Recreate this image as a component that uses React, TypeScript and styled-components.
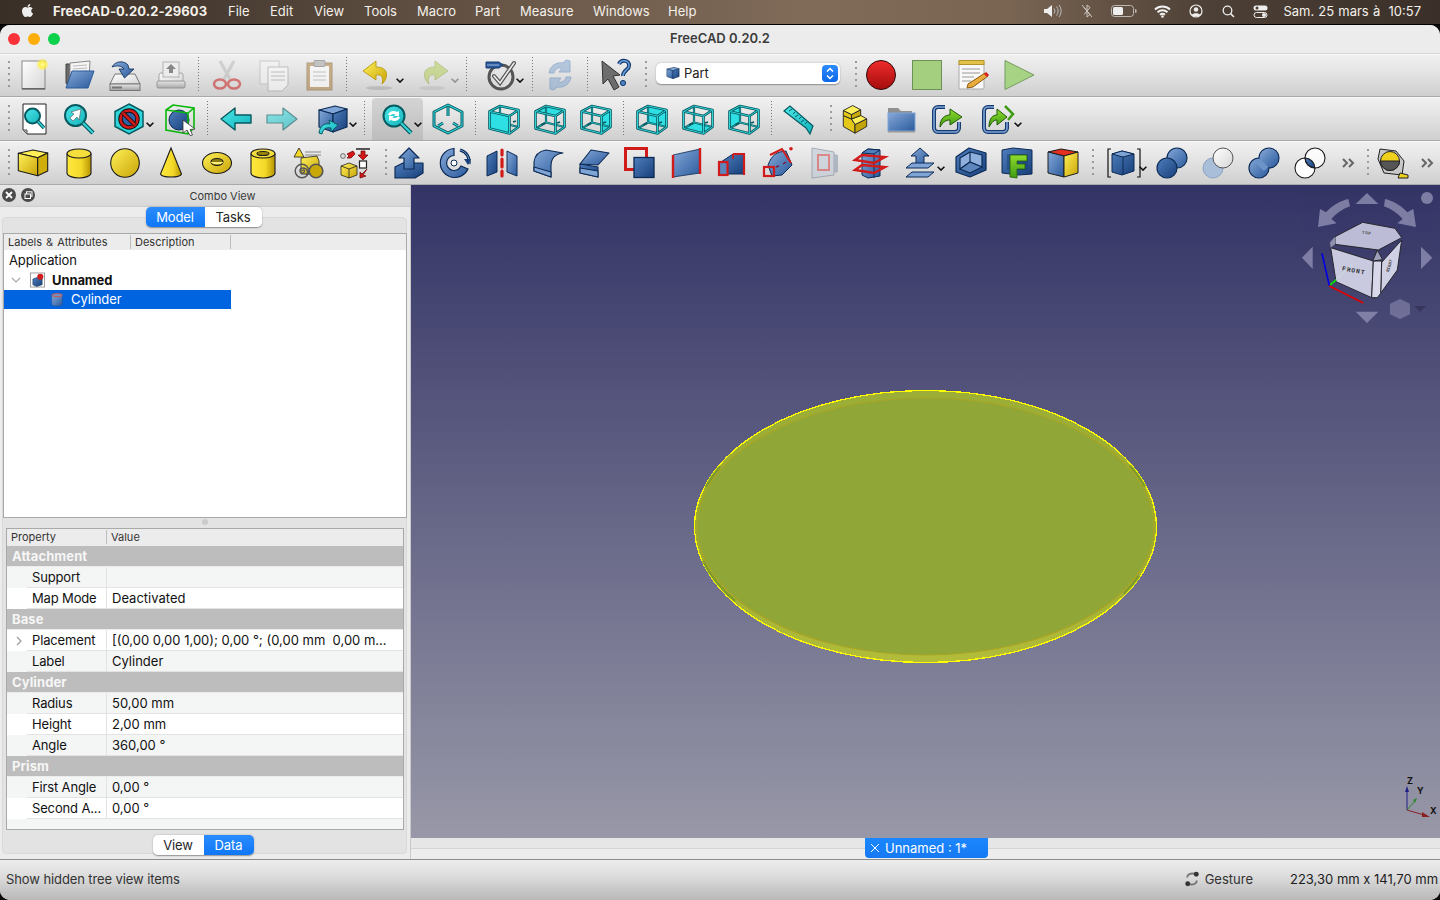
import React from 'react';
import styled, { createGlobalStyle, css } from 'styled-components';
import { FaApple } from 'react-icons/fa';

const GlobalStyle = createGlobalStyle`
  html, body { margin: 0; padding: 0; background: #111; }
  * { box-sizing: border-box; }
  body { font-family: Inter, "Liberation Sans", sans-serif; }
`;

const Root = styled.div`
  width: 1440px; height: 900px; overflow: hidden; display: flex; flex-direction: column; background: #0d0b0a;
`;
const MenuBar = styled.div`
  height: 25px; flex: none; display: flex; align-items: center; color: #f4f0ea; font-size: 13px;
  background: linear-gradient(90deg, #3a2f27 0%, #4a3d33 16%, #6f5c4c 40%, #806b59 56%, #7a6553 70%, #4d4036 84%, #3a3029 100%);
  border-bottom: 1px solid #000;
  padding: 0 19px 2px 20px;
`;
const MenuApple = styled.span`
  display: flex; font-size: 15px; width: 33px; color: #eee; margin-bottom: 1px;
`;
const MenuTitle = styled.span`
  font-weight: 700; width: 175px; letter-spacing: 0.1px;
`;
const MenuItem = styled.span<{ $w: number }>`
  width: ${p => p.$w}px;
`;
const Tray = styled.div`
  margin-left: auto; display: flex; align-items: center;
`;
const TrayIcon = styled.span<{ $ml: number }>`
  display: flex; margin-left: ${p => p.$ml}px;
`;
const Clock = styled.span`
  margin-left: 15px; word-spacing: 0.5px; white-space: pre;
`;

const Window = styled.div`
  flex: 1; display: flex; flex-direction: column; min-height: 0; overflow: hidden;
  border-radius: 10px; background: #ececec; letter-spacing: -0.1px;
`;
const TitleBar = styled.div`
  height: 29px; flex: none; position: relative; display: flex; align-items: center; justify-content: center;
  background: #ececec; border-bottom: 1px solid #d6d6d6; padding-bottom: 2px;
  font-size: 13px; font-weight: 600; color: #3c3c3c; letter-spacing: 0;
`;
const Lights = styled.div`
  position: absolute; left: 8px; top: 8px; display: flex; gap: 8px;
`;
const Light = styled.span<{ $c: string }>`
  width: 12px; height: 12px; border-radius: 50%; background: ${p => p.$c};
`;
const ToolRow = styled.div<{ $h: number; $pb?: number }>`
  height: ${p => p.$h}px; flex: none; display: flex; align-items: center; position: relative;
  padding-bottom: ${p => p.$pb ?? 0}px;
  background: linear-gradient(180deg, #f0f0f0 0%, #e6e6e6 35%, #cfcfcf 100%);
  border-bottom: 1px solid #a9a9a9;
  border-top: 1px solid #f8f8f8;
`;
const Slot = styled.span<{ $ml: number; $pressed?: boolean }>`
  width: 32px; height: 32px; flex: none; display: block; position: relative; margin-left: ${p => p.$ml}px;
  svg { position: relative; z-index: 1; display: block; }
  ${p => p.$pressed && css`
    &::before {
      content: ''; position: absolute; left: -9px; width: 51px; top: -5px; height: 42px;
      border-radius: 4px 4px 0 0; background: linear-gradient(180deg, #d4d4d4, #bdbdbd);
    }
  `}
`;
const CaretBox = styled.span<{ $ml: number; $faded?: boolean }>`
  width: 8px; height: 5px; flex: none; position: relative; z-index: 2; margin-left: ${p => p.$ml}px; margin-top: 10px;
  display: block; opacity: ${p => (p.$faded ? 0.35 : 1)};
  svg { display: block; }
`;
const Sep = styled.span<{ $ml: number }>`
  width: 1px; height: 36px; flex: none; margin-left: ${p => p.$ml}px;
  background: repeating-linear-gradient(180deg, #777 0 1px, transparent 1px 3px);
`;
const Grip = styled.span<{ $ml: number }>`
  width: 2px; height: 28px; flex: none; margin-left: ${p => p.$ml}px;
  background: repeating-linear-gradient(180deg, #9a9a9a 0 2px, transparent 2px 6px);
`;
const More = styled.span<{ $ml: number }>`
  width: 14px; flex: none; margin-left: ${p => p.$ml}px; display: block;
  svg { display: block; }
`;
const Combo = styled.div<{ $ml: number }>`
  width: 184px; height: 21px; flex: none; margin-left: ${p => p.$ml}px; margin-bottom: 3px; border-radius: 5px; background: #fff;
  box-shadow: 0 0.5px 1.5px rgba(0,0,0,.35); display: flex; align-items: center; padding: 0 0 1px 9px;
  font-size: 13px; color: #222; gap: 3px; position: relative;
`;
const ComboStep = styled.span`
  position: absolute; right: 2px; top: 2px; width: 16px; height: 17px; border-radius: 4px;
  background: linear-gradient(180deg, #2f8bff, #0a68e8); display: flex; align-items: center; justify-content: center;
`;

const Main = styled.div`
  flex: 1; display: flex; min-height: 0;
`;
const Panel = styled.aside`
  width: 411px; flex: none; display: flex; flex-direction: column; background: #ececec; border-right: 1px solid #c9c9c9;
  position: relative;
`;
const DockHead = styled.div`
  height: 22px; flex: none; position: relative; display: flex; align-items: center; justify-content: center;
  font-size: 11px; color: #3a3a3a; background: linear-gradient(180deg, #e6e6e6, #d8d8d8); padding-left: 35px;
  border-bottom: 1px solid #cdcdcd; letter-spacing: 0;
`;
const DockBtns = styled.div`
  position: absolute; left: 2px; top: 3px; display: flex; gap: 5px;
`;
const DockBtn = styled.span`
  width: 14px; height: 14px; border-radius: 50%; background: #4a4a4a; display: flex; align-items: center; justify-content: center;
`;
const Body = styled.div`
  flex: 1; display: flex; flex-direction: column; padding: 0 3px 0 3px; min-height: 0; position: relative;
`;
const Seg = styled.div`
  display: flex; height: 20px; border-radius: 5px; align-self: center; position: relative; z-index: 2;
  box-shadow: 0 0.5px 1.5px rgba(0,0,0,.4); overflow: hidden; font-size: 13px;
`;
const SegItem = styled.span<{ $on?: boolean; $w: number }>`
  width: ${p => p.$w}px; display: flex; align-items: center; justify-content: center;
  background: ${p => (p.$on ? 'linear-gradient(180deg,#2a8cff,#0f77f5)' : '#fff')};
  color: ${p => (p.$on ? '#fff' : '#262626')};
`;
const TopSeg = styled(Seg)`
  margin-left: -3px;
  margin-bottom: 6px;
`;
const Tree = styled.div`
  height: 285px; flex: none; background: #fff; border: 1px solid #a9a9a9;
  display: flex; flex-direction: column;
`;
const TreeHead = styled.div`
  height: 16px; flex: none; display: flex; background: #ececec; font-size: 11px; color: #333; align-items: center;
  padding-bottom: 1px; letter-spacing: 0;
`;
const TreeCol = styled.span<{ $w: number; $ws?: number }>`
  width: ${p => p.$w}px; padding-left: 4px; border-right: 1px solid #bdbdbd; line-height: 14px; white-space: nowrap;
  word-spacing: ${p => p.$ws ?? 0}px;
`;
const TreeRow = styled.div<{ $sel?: boolean; $bold?: boolean; $pad: number }>`
  height: ${p => (p.$sel ? 19 : 20)}px; width: 227px; display: flex; align-items: center; padding-left: ${p => p.$pad}px; font-size: 13px;
  padding-bottom: ${p => (p.$sel || p.$bold ? 1 : 0)}px;
  background: ${p => (p.$sel ? '#0064e1' : 'transparent')}; color: ${p => (p.$sel ? '#fff' : '#111')};
  font-weight: ${p => (p.$bold ? 700 : 400)};
  white-space: nowrap;
`;
const Grab = styled.div`
  height: 10px; flex: none; display: flex; align-items: center; justify-content: center; padding-bottom: 3px;
  &::after { content: ''; width: 6px; height: 6px; border-radius: 50%; background: #cbcbcb; }
`;
const PropBox = styled.div`
  margin-left: 3px; width: 398px; height: 302px; flex: none; background: #f4f5f5; border: 1px solid #a9a9a9;
  display: flex; flex-direction: column; position: relative; z-index: 1;
`;
const PropHead = styled.div`
  height: 17px; flex: none; display: flex; align-items: center; background: #ececec; font-size: 11px; color: #333;
  padding-bottom: 2px; letter-spacing: 0;
`;
const PropHeadCell = styled.span<{ $w?: number }>`
  width: ${p => (p.$w ? `${p.$w}px` : 'auto')}; padding-left: 4px; line-height: 14px;
  border-right: ${p => (p.$w ? '1px solid #bdbdbd' : 'none')};
`;
const GroupRow = styled.div`
  height: 21px; flex: none; background: #bdbdbd; color: #f6f6f6; font-size: 13px; font-weight: 700; padding-left: 5px;
  display: flex; align-items: center; border-bottom: 1px solid #ececec; letter-spacing: 0.1px;
`;
const PropRow = styled.div<{ $alt?: boolean }>`
  height: 21px; flex: none; display: flex; font-size: 13px; color: #111;
  background: ${p => (p.$alt ? '#f4f5f5' : '#fff')};
`;
const Gutter = styled.span`
  width: 20px; flex: none; display: flex; align-items: center; justify-content: center; padding-left: 4px;
`;
const NameCell = styled.span`
  width: 80px; flex: none; padding-left: 5px; border-right: 1px solid #e3e3e3; border-bottom: 1px solid #e3e3e3;
  display: flex; align-items: center; white-space: nowrap; letter-spacing: -0.15px;
`;
const ValueCell = styled.span`
  flex: 1; padding-left: 5px; border-bottom: 1px solid #e3e3e3; display: flex; align-items: center; white-space: pre; letter-spacing: 0;
`;
const BottomSeg = styled(Seg)`
  margin: 5px 0 0 -4px; z-index: 2;
`;
const GroupFrame = styled.div<{ $top: number; $h: number }>`
  position: absolute; left: 2px; right: 3px; top: ${p => p.$top}px; height: ${p => p.$h}px;
  background: #e3e3e3; border: 1px solid #d9d9d9; border-radius: 4px; z-index: 0;
`;
const Zed = styled.div`
  position: relative; z-index: 1; display: flex; flex-direction: column; flex: 1; min-height: 0;
`;

const ViewCol = styled.div`
  flex: 1; display: flex; flex-direction: column; min-width: 0;
`;
const Canvas = styled.div`
  height: 653px; flex: none; position: relative; overflow: hidden;
  background: linear-gradient(180deg, #333366 0%, #9898a8 100%);
`;
const Solid = styled.svg`
  position: absolute; left: 283px; top: 205px;
`;
const Cube = styled.svg`
  position: absolute; right: 0; top: 0;
`;
const Axis = styled.svg`
  position: absolute; right: 0; bottom: 18px;
`;
const TabStrip = styled.div`
  flex: 1; position: relative; background: #e6e6e6; display: flex; flex-direction: column;
  &::before { content: ''; height: 10px; border-bottom: 1px solid #d4d4d4; flex: none; }
  &::after { content: ''; flex: 1; background: #ededed; }
`;
const DocTab = styled.div`
  position: absolute; left: 454px; top: 0; width: 123px; height: 20px; border-radius: 0 0 4px 4px;
  background: linear-gradient(180deg, #1b87ff, #1579f2); color: #fff; font-size: 13px;
  display: flex; align-items: center; gap: 5px; padding-left: 5px; letter-spacing: 0;
`;
const StatusBar = styled.div`
  height: 41px; flex: none; display: flex; align-items: center; padding: 0 0 2px 6px; font-size: 13px; color: #333;
  background: linear-gradient(180deg, #ededed 0%, #dcdcdc 40%, #b9b9b9 100%); border-top: 1px solid #8c8c8c;
`;
const Gesture = styled.span`
  margin-left: auto; display: flex; align-items: center; gap: 5px; color: #333; letter-spacing: 0;
`;
const Dims = styled.span`
  margin-left: 37px; color: #1c1c1c; white-space: nowrap; width: 150px; letter-spacing: 0;
`;

/* ------- icons ------- */
const S = '#1c1c1c';
const Defs = () => (
  <svg width="0" height="0" style={{ position: 'absolute' }}>
    <defs>
      <linearGradient id="gY" x1="0" y1="0" x2="1" y2="1"><stop offset="0" stopColor="#fff15a" /><stop offset="1" stopColor="#c9a406" /></linearGradient>
      <linearGradient id="gYh" x1="0" y1="0" x2="1" y2="0"><stop offset="0" stopColor="#ffe93e" /><stop offset=".6" stopColor="#f3d828" /><stop offset="1" stopColor="#b89400" /></linearGradient>
      <linearGradient id="gB" x1="0" y1="0" x2="1" y2="1"><stop offset="0" stopColor="#86a9d8" /><stop offset="1" stopColor="#2a5a9c" /></linearGradient>
      <linearGradient id="gBd" x1="0" y1="0" x2="1" y2="1"><stop offset="0" stopColor="#4f7fbd" /><stop offset="1" stopColor="#173f7a" /></linearGradient>
      <linearGradient id="gW" x1="0" y1="0" x2="1" y2="1"><stop offset="0" stopColor="#fff" /><stop offset="1" stopColor="#d6d6d6" /></linearGradient>
      <linearGradient id="gG" x1="0" y1="0" x2="0" y2="1"><stop offset="0" stopColor="#e8e8e8" /><stop offset="1" stopColor="#a2a2a2" /></linearGradient>
      <linearGradient id="gC" x1="0" y1="0" x2="1" y2="1"><stop offset="0" stopColor="#4ce6e8" /><stop offset="1" stopColor="#12b4bc" /></linearGradient>
      <linearGradient id="gR" x1="0" y1="0" x2="0" y2="1"><stop offset="0" stopColor="#ef2b2b" /><stop offset="1" stopColor="#a50d0d" /></linearGradient>
      <linearGradient id="gGr" x1="0" y1="0" x2="0" y2="1"><stop offset="0" stopColor="#8fdc2e" /><stop offset="1" stopColor="#3f9a14" /></linearGradient>
      <linearGradient id="gRim" x1="0" y1="0" x2="0" y2="1"><stop offset="0" stopColor="#9cae35" /><stop offset=".6" stopColor="#9aad35" /><stop offset="1" stopColor="#b3bc3a" /></linearGradient>
      <radialGradient id="gGlow"><stop offset="0" stopColor="#fffbb0" /><stop offset=".45" stopColor="#fff04a" /><stop offset="1" stopColor="#fff04a" stopOpacity="0" /></radialGradient>
    </defs>
  </svg>
);

const C = { blue: '#0c2a55', cy: '#075a60', blueLine: '#173f7a' };

const wire = (fill: 'front' | 'top' | 'right' | 'back' | 'bottom' | 'left') => {
  const q: Record<string, string> = {
    front: '1.5,8.5 21.5,13 21.5,30.5 1.5,25.5',
    top: '1.5,8.5 12,3 30.5,7 21.5,13',
    right: '21.5,13 30.5,7 30.5,24 21.5,30.5',
    back: '12,3 30.5,7 30.5,24 12,19.5',
    bottom: '1.5,25.5 12,19.5 30.5,24 21.5,30.5',
    left: '1.5,8.5 12,3 12,19.5 1.5,25.5',
  };
  const outer = 'M1.5 8.5L12 3 30.5 7V24L21.5 30.5 1.5 25.5ZM1.5 8.5L21.5 13V30.5M21.5 13L30.5 7';
  const inner = 'M12 3V19.5M12 19.5L1.5 25.5M12 19.5L30.5 24';
  return (
    <g fill="none" strokeLinejoin="round">
      <polygon points={q[fill]} fill="#2ee0e4" />
      <path d={inner} stroke={C.cy} strokeWidth="2.2" />
      <path d={inner} stroke="#2fd4d8" strokeWidth=".7" />
      {fill === 'front' && <polygon points={q.front} fill="#2ee0e4" />}
      <path d={outer} stroke={C.cy} strokeWidth="2.6" />
      <path d={outer} stroke="#2fd4d8" strokeWidth="1" />
      <path d={fill === 'front' ? 'M25 19l3-1' : 'M7 22l4-2M26 19l-3 1'} stroke={C.cy} strokeWidth="1.8" />
    </g>
  );
};

const blueBox = (
  <g stroke={C.blue} strokeWidth="1.2" strokeLinejoin="round">
    <polygon points="2,7 18,3 30,6 16,11" fill="#7fa4d6" />
    <polygon points="2,7 16,11 16,29 2,24" fill="url(#gB)" />
    <polygon points="16,11 30,6 30,24 16,29" fill="url(#gBd)" />
  </g>
);

const isoLines = 'M16 2L30 9V23L16 30 2 23V9ZM16 4V13M6 23l5-3M26 23l-5-3';

const ICONS: Record<string, React.ReactNode> = {
  new: (<g><rect x="5" y="2" width="23" height="28" fill="url(#gW)" stroke="#888" strokeWidth="1" /><rect x="5" y="29" width="23" height="1.5" fill="#666" /><circle cx="25.5" cy="5.5" r="6.5" fill="url(#gGlow)" /></g>),
  open: (<g><polygon points="3,5 10,5 12,8 16,8 16,26 6,28 3,24" fill="#6a6a6a" stroke="#444" /><polygon points="7,4 27,2 26,20 7,22" fill="#f5f5f5" stroke="#888" /><path d="M10 7l14-1M10 10l14-1M10 13l14-1" stroke="#bbb" /><polygon points="9,12 31,12 25,29 3,29" fill="url(#gB)" stroke="#2a5a9c" /></g>),
  save: (<g><polygon points="6,15 26,15 31,25 1,25" fill="url(#gW)" stroke="#777" /><rect x="1" y="25" width="30" height="6.5" fill="url(#gG)" stroke="#777" /><rect x="3" y="27.5" width="10" height="2" fill="#777" /><path d="M3 8C6 2 15 1 19 6L20 10H25L15.5 19 10 10H15C13 7 8 6 3 8Z" fill="url(#gB)" stroke={C.blue} strokeWidth=".8" /></g>),
  saveAs: (<g opacity=".85"><rect x="4" y="14" width="24" height="11" rx="2" fill="url(#gW)" stroke="#999" /><rect x="8" y="3" width="16" height="15" fill="#eee" stroke="#aaa" /><polygon points="16,5 21,10 18,10 18,14 14,14 14,10 11,10" fill="#777" /><rect x="2" y="22" width="28" height="7" rx="1.5" fill="url(#gG)" stroke="#888" /></g>),
  cut: (<g opacity=".55" fill="none"><path d="M9 2L19 20M23 2L13 20" stroke="#b9b9b9" strokeWidth="3" /><ellipse cx="9" cy="25" rx="6" ry="4.5" stroke="#c81e1e" strokeWidth="2.5" /><ellipse cx="23" cy="25" rx="6" ry="4.5" stroke="#c81e1e" strokeWidth="2.5" /></g>),
  copy: (<g opacity=".5"><rect x="3" y="2" width="19" height="23" fill="#f8f8f8" stroke="#aaa" /><polygon points="11,8 31,8 31,26 25,32 11,32" fill="#fff" stroke="#999" /><path d="M14 13h14M14 17h14M14 21h14" stroke="#999" /></g>),
  paste: (<g opacity=".6"><rect x="4" y="4" width="25" height="27" fill="#b3894e" stroke="#8a6a3c" /><rect x="7" y="7" width="19" height="21" fill="#fff" /><rect x="11" y="1.5" width="11" height="6" rx="1" fill="#aaa" stroke="#777" /><path d="M10 13h13M10 17h13M10 21h13" stroke="#aaa" /></g>),
  undo: (<g><ellipse cx="17" cy="29" rx="13" ry="2" fill="#000" opacity=".12" /><path d="M14 2L1 12 14 21V16C19 15 22 18 20 25 26 20 28 8 14 8Z" fill="url(#gY)" stroke="#b59a10" strokeWidth=".9" strokeLinejoin="round" /></g>),
  redo: (<g opacity=".45"><ellipse cx="15" cy="29" rx="13" ry="2" fill="#000" opacity=".15" /><path d="M18 2L31 12 18 21V16C13 15 10 18 12 25 6 20 4 8 18 8Z" fill="#a8c838" stroke="#7f9a20" strokeWidth=".9" strokeLinejoin="round" /></g>),
  check: (<g fill="none"><circle cx="14" cy="18" r="12" stroke="#555" strokeWidth="3" /><circle cx="14" cy="18" r="9" stroke="#ddd" strokeWidth="1.5" /><path d="M7 17l6 7L27 4" stroke="#555" strokeWidth="4" strokeLinecap="round" /><path d="M7 17l6 7L27 4" stroke="#eee" strokeWidth="1.6" strokeLinecap="round" /><path d="M-1 3h13l4 3-4 3H-1Z" fill="#2a5a9c" stroke="#153a70" /><path d="M0 6h12" stroke="#9cbbe0" /></g>),
  refresh: (<g opacity=".5" fill="#7fa4d0" stroke="#4f7fbd" strokeWidth="1"><path d="M5 14C6 7 12 3 19 4L22 1 26 2V13L15 13 18 9C14 8 11 10 10 14Z" /><path d="M27 18C26 25 20 29 13 28L10 31 6 30V19L17 19 14 23C18 24 21 22 22 18Z" /></g>),
  whats: (<g><polygon points="2,2 20,16 13,17 19,28 14,31 8,20 3,25" fill="#6d6d6d" stroke="#333" /><path d="M19 5c2-5 11-4 10 2 0 4-6 4-6 10" fill="none" stroke="#123a72" strokeWidth="4" /><path d="M19 5c2-5 11-4 10 2 0 4-6 4-6 10" fill="none" stroke="#6b9ad2" strokeWidth="1.6" /><circle cx="23" cy="24" r="2.6" fill="#4f7fbd" stroke="#123a72" /></g>),
  rec: (<g><circle cx="16" cy="16" r="14.5" fill="url(#gR)" stroke="#2b0b0b" strokeWidth="1" /></g>),
  stop: (<rect x="1.5" y="1.5" width="29" height="29" fill="#a4cf7f" stroke="#6c9058" strokeWidth="1" />),
  macro: (<g><rect x="2" y="3" width="25" height="27" rx="1" fill="#f8f8f8" stroke="#aaa" /><rect x="2" y="1.5" width="25" height="4" fill="#e4c24a" stroke="#b4932a" /><path d="M5 10h18M5 14h18M5 18h12M5 22h9" stroke="#9a9a9a" /><path d="M11 25L28 14l3 3-15 11-6 1Z" fill="#e9ab3b" stroke="#8a5a10" /><path d="M28 14l3 3" stroke="#d62020" strokeWidth="3" /></g>),
  play: (<polygon points="2,1.5 31,16 2,30.5" fill="#a7d484" stroke="#769a60" strokeWidth="1" />),

  fitAll: (<g><polygon points="6,1 29,1 29,31 10,31 6,27" fill="#fff" stroke="#222" strokeWidth="1" /><polygon points="6,27 10,27 10,31" fill="#bbb" stroke="#555" /><circle cx="15.5" cy="13" r="7.5" fill="url(#gC)" stroke={C.cy} strokeWidth="2" /><path d="M21 18.5L27 25" stroke={C.cy} strokeWidth="3.5" /><path d="M21 18.5L27 25" stroke="#36d6d8" strokeWidth="1.5" /></g>),
  fitSel: (<g><circle cx="12.5" cy="12.5" r="10.5" fill="url(#gC)" stroke={C.cy} strokeWidth="2" /><path d="M20 20L30 30" stroke={C.cy} strokeWidth="4.5" /><path d="M20 20L30 30" stroke="#36d6d8" strokeWidth="2" /><polygon points="18,6 8,9 11,11 7,15 10,18 14,14 16,17" fill="#fff" stroke="#555" strokeWidth=".6" /></g>),
  noDraw: (<g><polygon points="16,1 30,8.5 30,23.5 16,31 2,23.5 2,8.5" fill="#2ed6da" stroke={C.cy} strokeWidth="1.5" /><circle cx="16" cy="16" r="9" fill="#2f62a8" /><circle cx="16" cy="16" r="8.5" fill="none" stroke="#111" strokeWidth="4.5" /><circle cx="16" cy="16" r="8.5" fill="none" stroke="#d11a1a" strokeWidth="2.6" /><path d="M10 10L22 22" stroke="#111" strokeWidth="4.5" /><path d="M10 10L22 22" stroke="#d11a1a" strokeWidth="2.6" /></g>),
  boundBox: (<g><circle cx="15" cy="17" r="10" fill="url(#gBd)" stroke="#0c2a55" /><polygon points="2,7 9,2 30,5 30,25 24,31 2,27" fill="none" stroke="#08b808" strokeWidth="1.6" /><path d="M2 7L24 10 30 5M24 10V31" stroke="#08b808" strokeWidth="1.6" fill="none" /><polygon points="19,17 31,26 26,26.5 28.5,32 26,32.5 23,27 19,30" fill="#fff" stroke="#333" strokeWidth=".8" /></g>),
  back: (<polygon points="1,16 15,5 15,12 31,12 31,20 15,20 15,27" fill="url(#gC)" stroke={C.cy} strokeWidth="1.4" strokeLinejoin="round" />),
  forward: (<g opacity=".6"><polygon points="31,16 17,5 17,12 1,12 1,20 17,20 17,27" fill="url(#gC)" stroke={C.cy} strokeWidth="1.2" strokeLinejoin="round" /></g>),
  stdViews: (<g>{blueBox}<path d="M2 30C3 22 8 20 13 21L12 17 21 22 14 29V25C9 24 6 26 5 31Z" fill="url(#gC)" stroke={C.cy} strokeWidth="1" /></g>),
  sync: (<g><circle cx="13" cy="13" r="10.5" fill="url(#gC)" stroke={C.cy} strokeWidth="2" /><path d="M20 20L30 30" stroke={C.cy} strokeWidth="4.5" /><path d="M20 20L30 30" stroke="#36d6d8" strokeWidth="2" /><path d="M7 12c1-4 6-5 9-3l2-1v5h-5l1.5-1.5c-2-1-4-.5-5 1ZM19 14c-1 4-6 5-9 3l-2 1v-5h5l-1.5 1.5c2 1 4 .5 5-1Z" fill="#fff" /></g>),
  iso: (<g fill="none" strokeLinejoin="round"><path d={isoLines} stroke={C.cy} strokeWidth="3" /><path d={isoLines} stroke="#2fd4d8" strokeWidth="1.1" /></g>),
  vFront: wire('front'), vTop: wire('top'), vRight: wire('right'), vRear: wire('back'), vBottom: wire('bottom'), vLeft: wire('left'),
  ruler: (<g><polygon points="2,8 8,3 31,23 28,31 24,25" fill="url(#gC)" stroke={C.cy} strokeWidth="1.2" /><path d="M10 6l-3 2M13 9l-2 2M16 12l-3 2M19 14l-2 2M22 17l-3 2M25 19l-2 2" stroke={C.cy} /></g>),
  part: (<g stroke="#222" strokeWidth=".9" strokeLinejoin="round"><polygon points="4.3,12.5 12.5,16 16,21.5 16,30.2 4.3,23.5" fill="#e3c81a" /><polygon points="16,21.5 27.7,15.8 27.7,23.5 16,30.2" fill="#c3a408" /><polygon points="12.5,16 21.7,12.5 27.7,15.8 16,21.5" fill="#fff05a" /><polygon points="4.3,7.5 12.5,11.5 12.5,16 4.3,12.5" fill="#e3c81a" /><polygon points="12.5,11.5 21.7,6.8 21.7,12.5 12.5,16" fill="#c9ab08" /><polygon points="4.3,7.5 13.7,2.5 21.7,6.8 12.5,11.5" fill="#fff05a" /></g>),
  folder: (<g><polygon points="3,5 13,5 16,8 27,8 27,12 3,12" fill="#8f8f8f" /><rect x="3" y="10" width="27" height="18" fill="url(#gB)" stroke="#7fa4d6" /><rect x="3" y="28" width="27" height="1.5" fill="#999" /></g>),
  link: (<g><path d="M14 4H7a4 4 0 0 0-4 4v17a4 4 0 0 0 4 4h17a4 4 0 0 0 4-4v-6" fill="none" stroke="#153a70" strokeWidth="4" /><path d="M14 4H7a4 4 0 0 0-4 4v17a4 4 0 0 0 4 4h17a4 4 0 0 0 4-4v-6" fill="none" stroke="#7fa4d6" strokeWidth="1.6" /><path d="M9 24C9 15 14 12 19 12V6L31 14 19 22V17C15 17 12 19 9 24Z" fill="url(#gGr)" stroke="#1f5a05" strokeWidth="1" /></g>),
  linkMore: (<g><path d="M13 4H7a4 4 0 0 0-4 4v17a4 4 0 0 0 4 4h15a4 4 0 0 0 4-4v-6" fill="none" stroke="#153a70" strokeWidth="4" /><path d="M13 4H7a4 4 0 0 0-4 4v17a4 4 0 0 0 4 4h15a4 4 0 0 0 4-4v-6" fill="none" stroke="#7fa4d6" strokeWidth="1.6" /><path d="M8 24C8 15 12 12 16 12V6L26 14 16 22V17C13 17 11 19 8 24Z" fill="url(#gGr)" stroke="#1f5a05" strokeWidth="1" /><path d="M24 3l8 8-5 6" fill="none" stroke="#3f9a14" strokeWidth="2.5" /></g>),

  box: (<g stroke={S} strokeWidth="1.1" strokeLinejoin="round"><polygon points="1.3,6.3 16,3 30.7,6 20.7,10.7" fill="#ffee55" /><polygon points="1.3,6.3 20.7,10.7 20.7,28.7 1.3,23.7" fill="url(#gY)" /><polygon points="20.7,10.7 30.7,6 30.7,24 20.7,28.7" fill="#cfae0c" /></g>),
  cyl: (<g stroke={S} strokeWidth="1.1"><path d="M4 7V26C4 29 10 31 16 31S28 29 28 26V7Z" fill="url(#gYh)" /><ellipse cx="16" cy="6.5" rx="12" ry="4.5" fill="#f3de3c" /></g>),
  sphere: (<circle cx="16" cy="16" r="14.3" fill="url(#gY)" stroke={S} strokeWidth="1.1" />),
  cone: (<g stroke={S} strokeWidth="1.1"><path d="M16 1L5.5 27C7 31 25 31 26.5 27Z" fill="url(#gYh)" /></g>),
  torus: (<g stroke={S} strokeWidth="1.1"><ellipse cx="16" cy="16" rx="14.5" ry="10.5" fill="url(#gY)" /><ellipse cx="16" cy="15" rx="6" ry="3.5" fill="#8a7a10" /><path d="M10 15c0 3 12 3 12 0" fill="#fff07a" stroke="none" /></g>),
  tube: (<g stroke={S} strokeWidth="1.1"><path d="M4 7V26C4 29 10 31 16 31S28 29 28 26V7Z" fill="url(#gYh)" /><ellipse cx="16" cy="6.5" rx="12" ry="4.5" fill="#f3de3c" /><ellipse cx="16" cy="6.5" rx="6" ry="2" fill="#9a860c" /></g>),
  prim: (<g stroke={S} strokeWidth=".8"><polygon points="6,1 1,10 11,10" fill="#f3d828" /><path d="M12 5H28M12 8H28" stroke="#888" strokeWidth="1.2" /><polygon points="8,11 24,9 26,14 26,27 8,27" fill="url(#gY)" /><g fill="none" stroke="#555" strokeWidth="1.4"><circle cx="9" cy="24" r="6.8" /><path d="M9 24c2-3 4 1 1 2-4 1-4-5 0-5 4 0 6 4 3 7" /></g><circle cx="23" cy="24" r="6.8" fill="#c8a808" stroke="#555" strokeWidth="1.6" /></g>),
  builder: (<g strokeWidth=".8"><path d="M17 2H31" stroke="#222" strokeWidth="1.6" /><polygon points="22,4 26,4 26,8 29,8 24,13 19,8 22,8" fill="#d21818" stroke="#7a0c0c" /><rect x="20.5" y="14" width="7" height="7" fill="#fff" stroke="#222" strokeWidth="1.2" /><polygon points="14,4 8,7 10,9 8,11 12,11 16,7" fill="#d21818" stroke="#7a0c0c" /><circle cx="4" cy="9" r="2.4" fill="#ddd" stroke="#555" /><polygon points="2,19 10,16 18,19 18,28 10,31 2,28" fill="url(#gY)" stroke="#222" /><path d="M2 19l8 3 8-3M10 22v9" stroke="#222" fill="none" /><polygon points="28,22 24,28 27,29 21,31 21,25 23,27" fill="#d21818" stroke="#7a0c0c" /></g>),

  extrude: (<g stroke={C.blue} strokeWidth="1.2" strokeLinejoin="round"><polygon points="2,20 10,16 30,16 30,26 22,31 2,31" fill="url(#gBd)" /><polygon points="16,1 26,11 21,11 21,22 11,22 11,11 6,11" fill="url(#gB)" /></g>),
  revolve: (<g><path d="M14 1.5A14.5 14.5 0 1 0 28 22L21 19A7.5 7.5 0 1 1 14 8.5Z" fill="url(#gB)" stroke={C.blue} strokeWidth="1.2" /><circle cx="14" cy="16" r="3" fill="#fff" stroke={C.blue} /><path d="M20 3C27 5 30 11 29 17" fill="none" stroke={C.blue} strokeWidth="3" /><path d="M20 3C27 5 30 11 29 17" fill="none" stroke="#6b9ad2" strokeWidth="1" /><polygon points="24,12 31,12 28,18" fill={C.blueLine} /></g>),
  mirror: (<g><polygon points="1,9 11,4 11,25 1,29" fill="url(#gBd)" stroke={C.blue} /><polygon points="21,4 31,9 31,29 21,25" fill="url(#gB)" stroke={C.blue} /><path d="M16 3v5M16 12v8M16 24v5" stroke="#d11a1a" strokeWidth="3.2" strokeLinecap="round" /></g>),
  fillet: (<g stroke={C.blue} strokeWidth="1.1" strokeLinejoin="round"><path d="M2 24V15C3 7 8 4 14 3L31 6C23 7 19 11 19 19V30L2 24Z" fill="url(#gB)" /><polygon points="2,20 19,25 19,30 2,24" fill="#7fa4d6" /></g>),
  chamfer: (<g stroke={C.blue} strokeWidth="1.1" strokeLinejoin="round"><polygon points="2,17 13,3 31,6 20,18" fill="url(#gB)" /><polygon points="2,17 20,20 20,30 2,26" fill="url(#gBd)" /><polygon points="2,21 20,24 20,30 2,26" fill="#7fa4d6" /></g>),
  face: (<g><rect x="1.5" y="1.5" width="21" height="21" fill="none" stroke="#d11a1a" strokeWidth="3" /><rect x="10" y="10.5" width="20" height="20" fill="url(#gBd)" stroke="#0c2a55" strokeWidth="1.3" /></g>),
  ruled: (<g><polygon points="3,8 30,2 30,26 3,30" fill="url(#gB)" stroke={C.blue} strokeWidth=".8" /><path d="M3 8V31M30 1V27" stroke="#d11a1a" strokeWidth="2.4" /></g>),
  loft: (<g><polygon points="5,15 17,7 28,7 28,27 12,27 5,27" fill="url(#gBd)" stroke={C.blue} /><path d="M17 7H28V28M28 7" fill="none" stroke="#d11a1a" strokeWidth="2.2" /><path d="M17 7V12" stroke="#d11a1a" strokeWidth="1.8" /><rect x="3" y="15" width="8.5" height="13" fill="#5d86bd" stroke="#d11a1a" strokeWidth="2.2" /></g>),
  sweep: (<g><path d="M6 18C10 8 14 5 24 4L30 18 20 28 10 29Z" fill="url(#gB)" stroke={C.blue} /><path d="M8 8L20 2 29 16" fill="none" stroke="#d11a1a" strokeWidth="2" /><circle cx="29" cy="1.8" r="1.8" fill="#d11a1a" /><rect x="2" y="20" width="10" height="9" fill="none" stroke="#d11a1a" strokeWidth="2.2" /><path d="M14 20l3-1M21 17l3-2" stroke="#7a1a3a" strokeWidth="1.5" /></g>),
  section: (<g opacity=".7"><polygon points="4,1 26,5 26,28 4,31" fill="#c7cfdb" stroke="#8b93a0" /><polygon points="26,7 30,8 30,25 26,26" fill="#99a4b5" /><rect x="10" y="8" width="11" height="15" fill="none" stroke="#d96060" strokeWidth="2" /></g>),
  cross: (<g><polygon points="8,6 14,2 26,3 26,29 14,31 8,28" fill="url(#gB)" stroke={C.blue} /><polygon points="8,6 20,7 26,3 14,2" fill="#4f7fbd" stroke={C.blue} /><path d="M20 7V31" stroke={C.blue} /><path d="M1 13L8 8 31 10 20 16ZM1 23L8 18 31 20 20 26Z" fill="none" stroke="#d11a1a" strokeWidth="2.4" /></g>),
  offset: (<g stroke={C.blue} strokeWidth="1"><polygon points="16,1 25,9 20,9 20,18 12,18 12,9 7,9" fill="url(#gB)" /><polygon points="8,16 30,16 24,21 2,21" fill="#7fa4d6" /><polygon points="8,25 30,25 24,30 2,30" fill="#7fa4d6" /></g>),
  thick: (<g stroke={C.blue} strokeWidth="1.2" strokeLinejoin="round"><polygon points="1,10 14,1 31,6 31,23 15,30 1,25" fill="url(#gBd)" /><polygon points="5,11 15,5 27,8 27,20 13,22 5,22" fill="#8fb0dc" /><path d="M15 5V15L5 22M15 15L27 20" fill="none" /><polygon points="5,22 15,15 27,20 15,26" fill="#5d86bd" /></g>),
  fpart: (<g><polygon points="1,3 12,1 31,3 31,27 18,28 1,26" fill="url(#gBd)" stroke="#0c2a55" /><rect x="6" y="7" width="21" height="16" fill="#173f7a" opacity=".5" /><path d="M9 30V8H26V14H16V17H24V22H16V31Z" fill="url(#gGr)" stroke="#1f5a05" strokeWidth=".8" /></g>),
  colored: (<g stroke={S} strokeWidth="1" strokeLinejoin="round"><polygon points="1,5 14,2 31,5 17,9" fill="#e53020" /><polygon points="1,5 17,9 17,30 1,26" fill="url(#gB)" /><polygon points="17,9 31,5 31,26 17,30" fill="url(#gY)" /></g>),
  compound: (<g><path d="M3 2H0V30H3" fill="none" stroke="#111" strokeWidth="1.2" /><path d="M29 2H32V30H29" fill="none" stroke="#111" strokeWidth="1.2" /><polygon points="4,7 14,4 26,7 26,24 14,28 4,25" fill="url(#gBd)" stroke={C.blue} /><polygon points="4,7 14,4 26,7 15,10" fill="#7fa4d6" stroke={C.blue} /><path d="M15 10V28" stroke={C.blue} /></g>),
  bool: (<g stroke={C.blue} strokeWidth="1.2"><circle cx="21" cy="11" r="10" fill="url(#gB)" /><circle cx="11" cy="21" r="10" fill="url(#gBd)" /></g>),
  cutB: (<g stroke="#555" strokeWidth="1"><circle cx="11" cy="21" r="10" fill="#a9bed8" stroke="#8ba4c5" /><circle cx="21" cy="11" r="10" fill="url(#gW)" /></g>),
  fuse: (<g><circle cx="21" cy="11" r="10" fill="url(#gB)" stroke={C.blue} strokeWidth="1.2" /><circle cx="11" cy="21" r="10" fill="url(#gB)" stroke={C.blue} strokeWidth="1.2" /><circle cx="21" cy="11" r="9.3" fill="url(#gB)" /><path d="M10 14L18 22" stroke="#6d94c8" strokeWidth="6" /></g>),
  common: (<g stroke={S} strokeWidth="1.1"><circle cx="11" cy="21" r="10" fill="#fff" /><circle cx="21" cy="11" r="10" fill="#fff" fillOpacity=".8" /><path d="M11.2 11C11 16 15 20.5 20.8 21 21 16 17 11.5 11.2 11Z" fill="url(#gBd)" /></g>),
  tape: (<g stroke="#222" strokeWidth="1"><path d="M4 2L20 4 28 14 26 28 8 26 2 12Z" fill="#c8c8c8" /><circle cx="14" cy="14" r="9.5" fill="#efd01c" /><path d="M4.5 14a9.5 9.5 0 0 0 19 0Z" fill="#555" /><polygon points="24,26 32,28 32,31 22,31" fill="#ecd11a" /></g>),
};

const More2 = () => (
  <svg width="14" height="10" viewBox="0 0 14 10"><path d="M1 1l4 4-4 4M7 1l4 4-4 4" fill="none" stroke="#666" strokeWidth="2" /></svg>
);
const Chevron = () => (
  <svg width="8" height="5" viewBox="0 0 8 5"><path d="M.6.7L4 4.1 7.4.7" fill="none" stroke="#111" strokeWidth="1.6" /></svg>
);

type It = [kind: string, x: number, faded?: boolean];
const widthOf = (k: string) => (k === 's' ? 1 : k === 'g' ? 2 : k === '^' ? 8 : k === '>' ? 14 : k === 'combo' ? 184 : 32);

const renderRow = (items: It[]) => {
  let right = 0;
  return items.map(([k, x, flag], i) => {
    const w = widthOf(k);
    const centred = k === 's' || k === 'g' || k === 'combo' ? false : true;
    const left = centred ? x - w / 2 : x;
    const ml = left - right;
    right = left + w;
    if (k === 's') return <Sep key={i} $ml={ml} />;
    if (k === 'g') return <Grip key={i} $ml={ml} />;
    if (k === '^') return <CaretBox key={i} $ml={ml} $faded={flag}><Chevron /></CaretBox>;
    if (k === '>') return <More key={i} $ml={ml}><More2 /></More>;
    if (k === 'combo') {
      return (
        <Combo key={i} $ml={ml}>
          <svg width="16" height="14" viewBox="0 0 32 32">{blueBox}</svg>
          Part
          <ComboStep>
            <svg width="8" height="13" viewBox="0 0 8 13"><path d="M1 4.5l3-3 3 3M1 8.5l3 3 3-3" fill="none" stroke="#fff" strokeWidth="1.5" /></svg>
          </ComboStep>
        </Combo>
      );
    }
    return (
      <Slot key={i} $ml={ml} $pressed={flag}>
        <svg width="32" height="32" viewBox="0 0 32 32" overflow="visible">{ICONS[k]}</svg>
      </Slot>
    );
  });
};

const ROW1: It[] = [['g', 8], ['new', 33], ['open', 79], ['save', 125], ['saveAs', 171], ['s', 198], ['cut', 227], ['copy', 273], ['paste', 319], ['s', 346], ['undo', 378], ['^', 400], ['redo', 433], ['^', 455, true], ['s', 466], ['check', 503], ['^', 520], ['s', 532], ['refresh', 560], ['s', 587], ['whats', 616], ['g', 645], ['combo', 656], ['g', 855], ['rec', 881], ['stop', 927], ['macro', 973], ['play', 1019]];
const ROW2: It[] = [['g', 8], ['fitAll', 33], ['fitSel', 79], ['noDraw', 129], ['^', 150], ['boundBox', 180], ['s', 207], ['back', 236], ['forward', 282], ['stdViews', 333], ['^', 353], ['s', 364], ['sync', 397, true], ['^', 418], ['iso', 448], ['s', 475], ['vFront', 504], ['vTop', 550], ['vRight', 596], ['s', 623], ['vRear', 652], ['vBottom', 698], ['vLeft', 744], ['s', 771], ['ruler', 798], ['g', 830], ['part', 855], ['folder', 901], ['link', 947], ['linkMore', 997], ['^', 1018]];
const ROW3: It[] = [['g', 8], ['box', 33], ['cyl', 79], ['sphere', 125], ['cone', 171], ['torus', 217], ['tube', 263], ['prim', 309], ['builder', 355], ['g', 385], ['extrude', 409], ['revolve', 456], ['mirror', 502], ['fillet', 548], ['chamfer', 594], ['face', 640], ['ruled', 686], ['loft', 732], ['sweep', 778], ['section', 824], ['cross', 870], ['offset', 920], ['^', 941], ['thick', 971], ['fpart', 1017], ['colored', 1063], ['g', 1092], ['compound', 1124], ['^', 1143], ['bool', 1172], ['cutB', 1218], ['fuse', 1264], ['common', 1310], ['>', 1349], ['g', 1367], ['tape', 1392], ['>', 1428]];

const NaviCube = () => (
  <Cube width="150" height="150" viewBox="0 0 450 450">
    <g fill="#8a8ab0" opacity=".85">
      <polygon points="197,57 265,57 231,24" />
      <polygon points="36,218 68,185 68,252" />
      <polygon points="393,185 393,252 427,218" />
      <polygon points="197,380 265,380 231,414" />
      <path d="M175 42C150 48 125 62 108 82L90 72 84 126 140 115 124 102C138 86 158 72 180 64Z" />
      <path d="M285 42C310 48 335 62 352 82L370 72 378 126 322 115 338 102C324 86 304 72 282 64Z" />
      <circle cx="411" cy="39" r="18" />
      <polygon points="300,356 330,342 360,356 360,388 330,402 300,388" opacity=".7" />
    </g>
    <polygon points="373,363 408,363 390,381" fill="#36365c" />
    <g stroke="#26262e" strokeWidth="3" strokeLinejoin="round" fill="#c6c6dc">
      <polygon points="135,155 218,112 315,130 335,158 265,195 135,178" fill="#bcbcd6" />
      <polygon points="122,188 250,228 245,338 138,290" fill="#c9c9e0" />
      <polygon points="275,232 335,165 322,255 272,325" fill="#d0d0e4" />
      <polygon points="250,228 275,228 272,325 262,338 245,338" fill="#d8d8ea" />
      <polygon points="120,172 135,155 135,178 122,188" fill="#8f8fae" stroke="none" />
      <polygon points="262,195 278,224 248,228" fill="#9ea0ba" />
    </g>
    <text x="155" y="256" fontSize="19" fontWeight="700" fill="#333" letterSpacing="3" transform="rotate(10 155 256)" fontFamily="Liberation Mono, monospace">FRONT</text>
    <text x="215" y="146" fontSize="13" fontWeight="700" fill="#555" letterSpacing="2" fontFamily="Liberation Mono, monospace" transform="rotate(8 215 146)">TOP</text>
    <text x="296" y="262" fontSize="13" fontWeight="700" fill="#444" transform="rotate(-72 296 262)" fontFamily="Liberation Mono, monospace">RIGHT</text>
    <path d="M120 300L188 238" stroke="#c8f0c8" strokeWidth="2" opacity=".8" />
    <path d="M120 300L138 285" stroke="#00e000" strokeWidth="5" />
    <path d="M96 205L118 302" stroke="#0000e0" strokeWidth="5" />
    <path d="M118 303L220 354" stroke="#e00000" strokeWidth="5" />
  </Cube>
);

const PropGroup = ({ children }: { children: React.ReactNode }) => <GroupRow>{children}</GroupRow>;
const Prop = ({ n, v, alt, exp }: { n: string; v?: string; alt?: boolean; exp?: boolean }) => (
  <PropRow $alt={alt}>
    <Gutter>
      {exp && <svg width="6" height="10" viewBox="0 0 6 10"><path d="M1 1l4 4-4 4" fill="none" stroke="#9a9a9a" strokeWidth="1.2" /></svg>}
    </Gutter>
    <NameCell>{n}</NameCell>
    <ValueCell>{v}</ValueCell>
  </PropRow>
);

export default function App() {
  return (
    <Root>
      <GlobalStyle />
      <Defs />
      <MenuBar>
        <MenuApple><FaApple /></MenuApple>
        <MenuTitle>FreeCAD-0.20.2-29603</MenuTitle>
        <MenuItem $w={42}>File</MenuItem>
        <MenuItem $w={44}>Edit</MenuItem>
        <MenuItem $w={50}>View</MenuItem>
        <MenuItem $w={53}>Tools</MenuItem>
        <MenuItem $w={58}>Macro</MenuItem>
        <MenuItem $w={45}>Part</MenuItem>
        <MenuItem $w={73}>Measure</MenuItem>
        <MenuItem $w={75}>Windows</MenuItem>
        <MenuItem $w={40}>Help</MenuItem>
        <Tray>
          <TrayIcon $ml={0}>
            <svg width="20" height="14" viewBox="0 0 20 14"><path d="M1 5h3l5-4v12l-5-4H1Z" fill="#eee" /><path d="M11 4.5a4 4 0 0 1 0 5M13.5 2.5a7 7 0 0 1 0 9M16 1a9.5 9.5 0 0 1 0 12" fill="none" stroke="#bbb" strokeWidth="1" /></svg>
          </TrayIcon>
          <TrayIcon $ml={18}>
            <svg width="12" height="14" viewBox="0 0 12 14"><path d="M3 3.5l6 7L6 13V1l3 2.5-6 7M1 1l10 12" fill="none" stroke="#cfc9c2" strokeWidth="1" /></svg>
          </TrayIcon>
          <TrayIcon $ml={18}>
            <svg width="26" height="12" viewBox="0 0 26 12"><rect x=".5" y=".5" width="22" height="11" rx="3" fill="none" stroke="#bdb7b0" /><rect x="2" y="2" width="10" height="8" rx="1.5" fill="#eee" /><rect x="24" y="4" width="1.5" height="4" rx="1" fill="#bdb7b0" /></svg>
          </TrayIcon>
          <TrayIcon $ml={17}>
            <svg width="17" height="13" viewBox="0 0 17 13"><path d="M1 4.5a11 11 0 0 1 15 0M3.5 7.2a7.5 7.5 0 0 1 10 0M6 9.8a3.8 3.8 0 0 1 5 0" fill="none" stroke="#f2f2f2" strokeWidth="1.9" /><circle cx="8.5" cy="11.5" r="1.3" fill="#f2f2f2" /></svg>
          </TrayIcon>
          <TrayIcon $ml={18}>
            <svg width="14" height="14" viewBox="0 0 14 14"><circle cx="7" cy="7" r="6" fill="none" stroke="#eee" strokeWidth="1.2" /><circle cx="7" cy="5.5" r="2.3" fill="#eee" /><path d="M2.8 11c1-2.5 7.4-2.5 8.4 0-2 2-6.4 2-8.4 0Z" fill="#eee" /></svg>
          </TrayIcon>
          <TrayIcon $ml={19}>
            <svg width="13" height="13" viewBox="0 0 13 13"><circle cx="5.5" cy="5.5" r="4.3" fill="none" stroke="#eee" strokeWidth="1.3" /><path d="M8.6 8.6L12 12" stroke="#eee" strokeWidth="1.5" /></svg>
          </TrayIcon>
          <TrayIcon $ml={18}>
            <svg width="15" height="13" viewBox="0 0 15 13"><rect x=".5" y=".5" width="14" height="5" rx="2.5" fill="#eee" /><circle cx="4" cy="3" r="1.5" fill="#4a3e34" /><rect x="1" y="7.5" width="13" height="5" rx="2.5" fill="none" stroke="#eee" /><circle cx="11" cy="10" r="2" fill="#eee" /></svg>
          </TrayIcon>
          <Clock>Sam. 25 mars à  10:57</Clock>
        </Tray>
      </MenuBar>
      <Window>
        <TitleBar>
          <Lights>
            <Light $c="#f9323a" />
            <Light $c="#fdae0a" />
            <Light $c="#0bd14b" />
          </Lights>
          FreeCAD 0.20.2
        </TitleBar>
        <ToolRow $h={43} $pb={1}>{renderRow(ROW1)}</ToolRow>
        <ToolRow $h={44}>{renderRow(ROW2)}</ToolRow>
        <ToolRow $h={44}>{renderRow(ROW3)}</ToolRow>
        <Main>
          <Panel>
            <DockHead>
              <DockBtns>
                <DockBtn>
                  <svg width="8" height="8" viewBox="0 0 8 8"><path d="M1 1l6 6M7 1L1 7" stroke="#fff" strokeWidth="1.8" /></svg>
                </DockBtn>
                <DockBtn>
                  <svg width="9" height="9" viewBox="0 0 9 9"><rect x="2.5" y=".8" width="5.5" height="4.5" fill="none" stroke="#fff" /><rect x="1" y="3" width="5.5" height="4.5" fill="#4a4a4a" stroke="#fff" /></svg>
                </DockBtn>
              </DockBtns>
              Combo View
            </DockHead>
            <Body>
              <GroupFrame $top={10} $h={637} />
              <Zed>
                <TopSeg>
                  <SegItem $on $w={59}>Model</SegItem>
                  <SegItem $w={57}>Tasks</SegItem>
                </TopSeg>
                <Tree>
                  <TreeHead>
                    <TreeCol $w={127} $ws={1}>Labels &amp; Attributes</TreeCol>
                    <TreeCol $w={100}>Description</TreeCol>
                  </TreeHead>
                  <TreeRow $pad={5}>Application</TreeRow>
                  <TreeRow $pad={7} $bold>
                    <svg width="10" height="6" viewBox="0 0 10 6" style={{ marginRight: 9 }}><path d="M1 1l4 4 4-4" fill="none" stroke="#aaa" strokeWidth="1.2" /></svg>
                    <svg width="15" height="16" viewBox="0 0 32 32" style={{ marginRight: 7 }}>
                      <rect x="1" y="1" width="30" height="30" fill="#fff" stroke="#999" strokeWidth="2" />
                      <polygon points="6,14 16,10 26,14 26,26 14,30 6,26" fill="url(#gBd)" stroke="#0c2a55" />
                      <circle cx="22" cy="9" r="6.5" fill="#d11a1a" />
                    </svg>
                    Unnamed
                  </TreeRow>
                  <TreeRow $pad={46} $sel>
                    <svg width="14" height="15" viewBox="0 0 32 32" style={{ marginRight: 7 }}>
                      <path d="M4 6V27C4 30 10 31 16 31S28 30 28 27V6Z" fill="url(#gB)" stroke="#30507c" />
                      <ellipse cx="16" cy="6" rx="12" ry="3.5" fill="#6f93c4" stroke="#d05050" strokeWidth="2" />
                    </svg>
                    Cylinder
                  </TreeRow>
                </Tree>
                <Grab />
                <PropBox>
                  <PropHead>
                    <PropHeadCell $w={100}>Property</PropHeadCell>
                    <PropHeadCell>Value</PropHeadCell>
                  </PropHead>
                  <PropGroup>Attachment</PropGroup>
                  <Prop n="Support" alt />
                  <Prop n="Map Mode" v="Deactivated" />
                  <PropGroup>Base</PropGroup>
                  <Prop n="Placement" v="[(0,00 0,00 1,00); 0,00 °; (0,00 mm  0,00 m..." exp />
                  <Prop n="Label" v="Cylinder" alt />
                  <PropGroup>Cylinder</PropGroup>
                  <Prop n="Radius" v="50,00 mm" alt />
                  <Prop n="Height" v="2,00 mm" />
                  <Prop n="Angle" v="360,00 °" alt />
                  <PropGroup>Prism</PropGroup>
                  <Prop n="First Angle" v="0,00 °" alt />
                  <Prop n="Second A..." v="0,00 °" />
                </PropBox>
                <BottomSeg>
                  <SegItem $w={51}>View</SegItem>
                  <SegItem $on $w={50}>Data</SegItem>
                </BottomSeg>
              </Zed>
            </Body>
          </Panel>
          <ViewCol>
            <Canvas>
              <Solid width="464" height="274" viewBox="0 0 464 274">
                <ellipse cx="231.5" cy="136.5" rx="231" ry="136" fill="url(#gRim)" stroke="#ffff00" strokeWidth="1.3" shapeRendering="crispEdges" />
                <g fill="none" stroke="#7d9a2c" strokeWidth="2.5">
                  <path d="M9 170.5A230 133 0 0 0 41 211" />
                  <path d="M12 96.6A230 133 0 0 1 26 76.6" />
                  <path d="M436 75.5A230 133 0 0 1 451 96.6" />
                  <path d="M445 186A230 133 0 0 1 430 203.7" />
                </g>
                <ellipse cx="231.5" cy="136.5" rx="228.5" ry="128.5" fill="#90a737" stroke="#a8a426" strokeWidth="1.2" />
              </Solid>
              <NaviCube />
              <Axis width="40" height="44" viewBox="0 0 40 44">
                <path d="M7 34V14" stroke="#20208a" strokeWidth="1" />
                <polygon points="5,16 7,10 9,16" fill="#20208a" />
                <path d="M7 34L14 26" stroke="#2a8a2a" />
                <polygon points="13,24 17,22 15,27" fill="#2a8a2a" />
                <path d="M7 34L24 39" stroke="#8a2020" />
                <polygon points="22,36 30,41 22,41" fill="#8a2020" />
                <text x="7" y="8" fontSize="9" fontWeight="700" fill="#111" fontFamily="Inter, sans-serif">Z</text>
                <text x="17" y="18" fontSize="9" fontWeight="700" fill="#111" fontFamily="Inter, sans-serif">Y</text>
                <text x="30" y="38" fontSize="9" fontWeight="700" fill="#111" fontFamily="Inter, sans-serif">X</text>
              </Axis>
            </Canvas>
            <TabStrip>
              <DocTab>
                <svg width="10" height="10" viewBox="0 0 10 10"><path d="M1 1l8 8M9 1L1 9" stroke="#fff" strokeWidth="1" /></svg>
                Unnamed : 1*
              </DocTab>
            </TabStrip>
          </ViewCol>
        </Main>
        <StatusBar>
          Show hidden tree view items
          <Gesture>
            <svg width="16" height="16" viewBox="0 0 15 15"><path d="M3 6C3 3 6 2 10 2.5M12 9c0 3-3 4-7 3.5" fill="none" stroke="#777" strokeWidth="1.8" /><circle cx="11.5" cy="3" r="2.3" fill="#333" /><circle cx="3.5" cy="12" r="2.3" fill="#333" /></svg>
            Gesture
          </Gesture>
          <Dims>223,30 mm x 141,70 mm</Dims>
        </StatusBar>
      </Window>
    </Root>
  );
}
